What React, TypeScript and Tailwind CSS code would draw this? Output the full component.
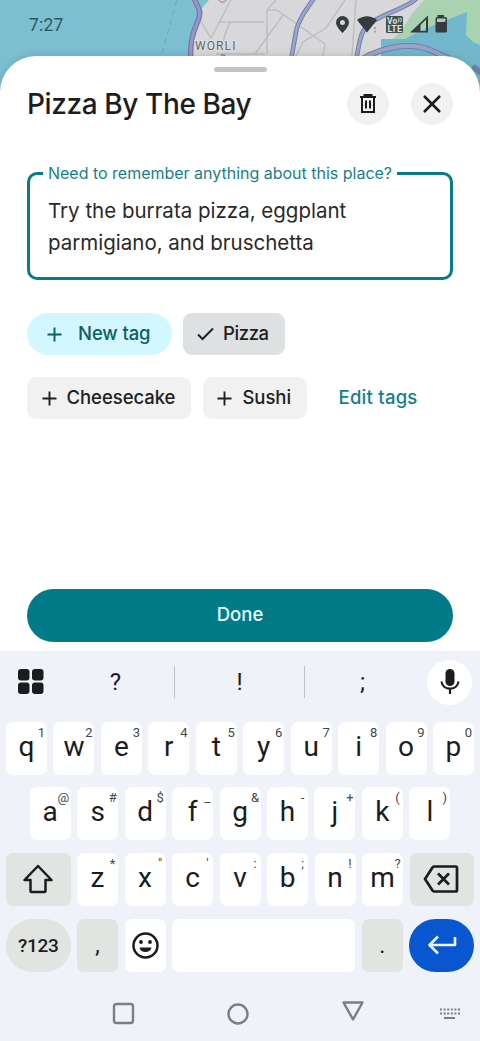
import type { ReactNode } from 'react';

interface KeyDef {
    label: string;
    hint: string;
}

const ROW_ONE: KeyDef[] = 'qwertyuiop'.split('').map((label, i) => ({ label, hint: '1234567890'[i] }));
const ROW_TWO: KeyDef[] = 'asdfghjkl'.split('').map((label, i) => ({ label, hint: '@#$_&-+()'[i] }));
const ROW_THREE: KeyDef[] = 'zxcvbnm'.split('').map((label, i) => ({ label, hint: '*"\':;!?'[i] }));

function MapBackdrop() {
    return (
        <svg className="absolute left-0 top-0" width="480" height="104" viewBox="0 0 480 104" fill="none">
            <rect width="480" height="104" fill="#7bbfd1" />
            <path d="M191 0L200 14L192 40L190 104H480V0Z" fill="#d8d8da" />
            <path d="M196 0H209L202 8L203 14L193 12Z" fill="#7bc5d3" />
            <path d="M424 0H480V104H400L392 40L402 30L412 14Z" fill="#a9d2b0" />
            <path d="M381 39H405L424 29L467 12L466 35L473 42L480 45V104H381Z" fill="#73b7cd" />
            <path d="M177 0L160 60" stroke="#6babb9" strokeWidth="1" strokeDasharray="6 4" />
            {/* streets */}
            <g stroke="#bdbdc3" strokeWidth="1.4">
                <path d="M231 0L211 38L201 22M218 22H264M230 22C228 30 223 34 224 42M216 54H265" />
                <path d="M276 0L267 10V54M267 10H277L325 44L323 56M283 15L255 54M345 0L326 28L303 42L296 56M356 0L352 56" />
            </g>
            {/* coast road and highways */}
            <g strokeLinecap="round">
                <path d="M193 -3C197 5 201 10 199 18C196 27 189 38 191 60" stroke="#7777ad" strokeWidth="5.5" />
                <path d="M193 -3C197 5 201 10 199 18C196 27 189 38 191 60" stroke="#9697c4" strokeWidth="3" />
                <path d="M315 -3C306 10 298 20 296 32L291 60M416 -1C406 8 386 13 372 22C359 30 360 43 356 60" stroke="#727ea8" strokeWidth="4.6" />
                <path d="M315 -3C306 10 298 20 296 32L291 60M416 -1C406 8 386 13 372 22C359 30 360 43 356 60" stroke="#99a4cb" strokeWidth="2.8" />
                <path d="M364 58C380 49 408 41 430 50L448 58M475 68L480 72" stroke="#7280a5" strokeWidth="6" />
                <path d="M364 58C380 49 408 41 430 50L448 58" stroke="#98a5c6" strokeWidth="4" />
            </g>
            <text x="195" y="50" fontSize="12" fontFamily="Roboto, sans-serif" letterSpacing="1.1" fill="#62646a" stroke="#e2e2e4" strokeWidth="2" paintOrder="stroke">WORLI</text>
            <circle cx="223" cy="57" r="2.200" stroke="#62646a" />
            <path d="M219 0C220 3 225 3 226 0" stroke="#777" />
        </svg>
    );
}

function StatusBar() {
    return (
        <div className="relative flex h-[56px] items-start justify-between pl-[29px] pr-[32px] pt-[14px] text-[#2f5660]">
            <span className="font-[Roboto] text-[17.5px] leading-[22px] tracking-[0.2px]">7:27</span>
            <svg className="mt-[1px]" width="112" height="19" viewBox="336 15 112 19" fill="#353b3e">
                <path fillRule="evenodd" d="M342.500 16A6.500 6.500 0 0 0 336 22.500C336 27 342.500 33 342.500 33S349 27 349 22.500A6.500 6.500 0 0 0 342.500 16ZM342.500 20A2.500 2.500 0 1 1 342.500 25A2.500 2.500 0 0 1 342.500 20Z" />
                <path d="M357 20Q367 12.500 377 20L367 32.500Z" />
                <path d="M374 27H376V29H374ZM374 30.500H376V32.500H374Z" fill="#a9a0a6" />
                <rect x="386" y="16" width="17" height="17" rx="1.500" fill="#42504f" />
                <text x="387" y="24" fontSize="8.5" fontWeight="700" fontFamily="Roboto" fill="#dce5df" textLength="15">Vo⁾⁾</text>
                <text x="387.500" y="32" fontSize="9" fontWeight="700" fontFamily="Roboto" fill="#dce5df" textLength="14.500" lengthAdjust="spacingAndGlyphs">LTE</text>
                <path fillRule="evenodd" d="M410 32.500L428 15.500V32.500ZM420.500 31H426V19.500L420.500 25Z" />
                <path fillRule="evenodd" d="M437.500 15H444V17H445.500Q447 17 447 18.500V31Q447 32.500 445.500 32.500H437Q435.500 32.500 435.500 31V18.500Q435.500 17 437 17H437.500ZM437 18.500V22H445.500V18.500Z" />
            </svg>
        </div>
    );
}

function PlusIcon() {
    return (
        <svg width="15" height="15" viewBox="0 0 15 15" stroke="currentColor" strokeWidth="1.9">
            <path d="M7.500 0.500V14.500M0.500 7.500H14.500" />
        </svg>
    );
}

function RoundButton({ label, children }: { label: string; children: ReactNode }) {
    return (
        <button aria-label={label} className="flex size-[42px] items-center justify-center rounded-full bg-[#f1f1f1] text-[#1c1c1c]">
            {children}
        </button>
    );
}

function Tag({ label, selected = false }: { label: string; selected?: boolean }) {
    return (
        <button className={`flex h-[42px] items-center rounded-[9px] text-[18.5px] font-medium text-[#202122] ${selected
            ? 'w-[102px] gap-[9px] bg-[#dde1e1] pl-[14px] tracking-[-0.4px]'
            : 'gap-[10px] bg-[#f1f1f1] pl-[14.5px] pr-[15.5px] tracking-[-0.05px]'
        }`}>
            {selected ? (
                <svg width="17" height="14" viewBox="0 0 17 14" fill="none" stroke="currentColor" strokeWidth="2">
                    <path d="M1 7.500L5.500 12L16 1.500" />
                </svg>
            ) : <PlusIcon />}
            <span>{label}</span>
        </button>
    );
}

function LetterKey({ label, hint }: KeyDef) {
    return (
        <button className="relative h-[53px] w-[41px] shrink-0 rounded-[7px] bg-white pb-[3px] text-center font-[Roboto] text-[28px] leading-[50px] text-[#1b1c1e]">
            {label}
            <span className="absolute right-[1.5px] top-[3px] min-w-[8px] text-center text-[13px] leading-[15px] text-[#45474a]">{hint}</span>
        </button>
    );
}

function Keyboard() {
    return (
        <div className="h-[390px] bg-[#eff2f8] text-[#1b1c1e]">
            <div className="flex h-[62px] items-center">
                <svg className="ml-[18px]" width="26" height="26" viewBox="0 0 26 26" fill="currentColor">
                    <rect x="0" y="0" width="11.500" height="11.500" rx="3" />
                    <rect x="14" y="0" width="11.500" height="11.500" rx="3" />
                    <rect x="0" y="13.500" width="11.500" height="11.500" rx="3" />
                    <rect x="14" y="13.500" width="11.500" height="11.500" rx="3" />
                </svg>
                <div className="ml-[13px] flex flex-1 items-center font-[Roboto] text-[24px]">
                    <span className="w-[117px] text-center">?</span>
                    <span className="h-[32px] w-px bg-[#bfc2c7]" />
                    <span className="w-[129px] text-center">!</span>
                    <span className="h-[32px] w-px bg-[#bfc2c7]" />
                    <span className="w-[115px] text-center">;</span>
                </div>
                <div className="mr-2 flex size-[45px] items-center justify-center rounded-full bg-white">
                    <svg width="20" height="26" viewBox="0 0 20 26" fill="none" stroke="currentColor" strokeWidth="2.2">
                        <rect x="5.500" y="0" width="9" height="17" rx="4.500" fill="currentColor" stroke="none" />
                        <path d="M1.500 12.500C2.500 22 17.500 22 18.500 12.500M10 19.500V25" />
                    </svg>
                </div>
            </div>
            <div className="flex flex-col gap-[12.7px] px-[6px] pt-[8.500px]">
                <div className="flex justify-between">
                    {ROW_ONE.map((key) => <LetterKey key={key.label} {...key} />)}
                </div>
                <div className="flex justify-between px-[23.7px]">
                    {ROW_TWO.map((key) => <LetterKey key={key.label} {...key} />)}
                </div>
                <div className="flex justify-between">
                    <button aria-label="Shift" className="flex h-[53px] w-[64.500px] items-center justify-center rounded-[7px] bg-[#e1e4e1]">
                        <svg width="32" height="30" viewBox="0 0 32 30" fill="none" stroke="currentColor" strokeWidth="2.500" strokeLinejoin="round">
                            <path d="M16 2L29.500 16H23.500V27Q23.500 28 22.500 28H9.500Q8.500 28 8.500 27V16H2.500Z" />
                        </svg>
                    </button>
                    {ROW_THREE.map((key) => <LetterKey key={key.label} {...key} />)}
                    <button aria-label="Backspace" className="flex h-[53px] w-[64.500px] items-center justify-center rounded-[7px] bg-[#e1e4e1]">
                        <svg className="mr-[2px]" width="36" height="28" viewBox="0 0 36 28" fill="none" stroke="currentColor" strokeWidth="2.700" strokeLinejoin="round">
                            <path d="M11 1.500H32.500Q34 1.500 34 3V25Q34 26.500 32.500 26.500H11Q10 26.500 9.500 25.500L2 14L9.500 2.500Q10 1.500 11 1.500Z" />
                            <path d="M15 8.500L26 19.500M26 8.500L15 19.500" />
                        </svg>
                    </button>
                </div>
                <div className="flex justify-between font-[Roboto]">
                    <button className="h-[53px] w-[64.500px] rounded-full bg-[#e1e4e1] pt-[2px] text-[19px] font-medium tracking-[-0.3px]">?123</button>
                    <button className="h-[53px] w-[41px] rounded-[7px] bg-[#e1e4e1] pt-[3px] text-[23px]">,</button>
                    <button aria-label="Emoji" className="flex h-[53px] w-[41px] items-center justify-center rounded-[7px] bg-white">
                        <svg width="27" height="27" viewBox="0 0 27 27" fill="none">
                            <circle cx="13.500" cy="13.500" r="12" stroke="currentColor" strokeWidth="2.500" />
                            <circle cx="9" cy="10" r="1.900" fill="currentColor" />
                            <circle cx="18" cy="10" r="1.900" fill="currentColor" />
                            <path d="M7.500 15.500H19.500C18.500 21.500 8.500 21.500 7.500 15.500Z" fill="currentColor" />
                        </svg>
                    </button>
                    <button aria-label="Space" className="h-[53px] w-[183px] rounded-[7px] bg-white" />
                    <button className="h-[53px] w-[41px] rounded-[7px] bg-[#e1e4e1] pt-[2px] text-[23px]">.</button>
                    <button aria-label="Enter" className="flex h-[53px] w-[64.500px] items-center justify-center rounded-full bg-[#0957d0] text-[#edf3ff]">
                        <svg width="30" height="20" viewBox="0 0 30 20" fill="none" stroke="currentColor" strokeWidth="2.600" strokeLinejoin="round">
                            <path d="M11 1.500L2.500 10L11 18.500M3 10H28V2" />
                        </svg>
                    </button>
                </div>
            </div>
            {/* system navigation */}
            <svg className="mt-[22px]" width="480" height="40" viewBox="0 994 480 40" fill="none" stroke="#7c7e83" strokeWidth="2.400">
                <rect x="114" y="1004" width="19" height="19" rx="2.500" />
                <circle cx="238" cy="1014" r="9.500" />
                <path d="M343.500 1002.500H362.500L353 1019.500Z" strokeLinejoin="round" />
                <path d="M440 1009.500H460M440 1013.500H460" strokeWidth="2" strokeDasharray="2 1.600" />
                <path d="M444 1018H455" strokeWidth="2" />
            </svg>
        </div>
    );
}

export default function App() {
    return (
        <div className="relative h-[1041px] w-[480px] overflow-hidden bg-white font-[Inter,sans-serif]">
            <MapBackdrop />
            <StatusBar />
            <main className="relative flex h-[595px] flex-col rounded-t-[36px] bg-white px-[27px] shadow-[0_0_8px_rgba(0,0,0,0.15)]">
                <div className="mt-[11px] h-[5px] w-[53px] self-center rounded-full bg-[#c4c4c4]" />
                <div className="mt-[11px] flex items-center">
                    <h1 className="flex-1 whitespace-nowrap text-[28px] font-medium leading-[42px] tracking-[-0.4px] text-[#1d1d1d]">Pizza By The Bay</h1>
                    <div className="flex gap-[22px]">
                        <RoundButton label="Delete">
                            <svg width="18" height="20" viewBox="0 0 18 20" fill="none" stroke="currentColor" strokeWidth="2">
                                <path d="M1 3H17M5.500 2V1H12.500V2M3 3V18H15V3M7 6.500V14.500M11 6.500V14.500" />
                            </svg>
                        </RoundButton>
                        <RoundButton label="Close">
                            <svg width="18" height="18" viewBox="0 0 18 18" stroke="currentColor" strokeWidth="2.500">
                                <path d="M1 1L17 17M17 1L1 17" />
                            </svg>
                        </RoundButton>
                    </div>
                </div>
                <fieldset className="mt-[37px] h-[118px] rounded-[10px] border-[3px] border-[#087b87] pl-[13px]">
                    <legend className="whitespace-nowrap px-[5px] text-[16px] leading-[22px] tracking-[-0.01px] text-[#1b7f87]">Need to remember anything about this place?</legend>
                    <p className="mt-[11px] whitespace-nowrap pl-[5px] text-[20.5px] leading-[32px] text-[#292929]">
                        Try the burrata pizza, eggplant<br />
                        parmigiano, and bruschetta
                    </p>
                </fieldset>
                <div className="mt-[33px] flex gap-[11px]">
                    <button className="flex h-[42px] w-[145px] items-center gap-[16px] rounded-full bg-[#d2f7ff] pl-[20px] text-[18.500px] font-medium tracking-[-0.1px] text-[#115d62]">
                        <PlusIcon />
                        <span>New tag</span>
                    </button>
                    <Tag label="Pizza" selected />
                </div>
                <div className="mt-[22px] flex items-center gap-[12px]">
                    <Tag label="Cheesecake" />
                    <Tag label="Sushi" />
                    <a className="ml-[20px] text-[18.500px] font-medium tracking-[0.25px] text-[#14808a]">Edit tags</a>
                </div>
                <button className="mb-[9.500px] mt-auto h-[53px] rounded-full bg-[#007b87] text-[18.500px] font-medium text-[#eafcff]">Done</button>
            </main>
            <div className="relative">
                <Keyboard />
            </div>
        </div>
    );
}
